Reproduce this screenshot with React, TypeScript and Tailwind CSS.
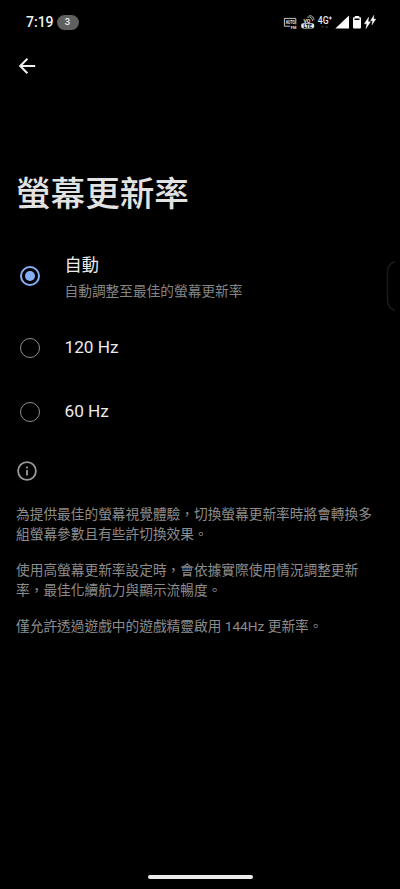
import { useState } from "react";
import clsx from "clsx";

type Option = {
  id: string;
  label: string;
  description?: string;
};

const OPTIONS: Option[] = [
  { id: "auto", label: "自動", description: "自動調整至最佳的螢幕更新率" },
  { id: "120", label: "120 Hz" },
  { id: "60", label: "60 Hz" },
];

const NOTES = [
  ["為提供最佳的螢幕視覺體驗，切換螢幕更新率時將會轉換多", "組螢幕參數且有些許切換效果。"],
  ["使用高螢幕更新率設定時，會依據實際使用情況調整更新", "率，最佳化續航力與顯示流暢度。"],
  ["僅允許透過遊戲中的遊戲精靈啟用 144Hz 更新率。"],
];

function StatusIcons() {
  return (
    <svg width="94" height="18" viewBox="282 13 94 18" fill="#e8e8e8">
      {/* auto refresh rate */}
      <path d="M290 26.2h-5.6V18.4h11.400v6" fill="none" stroke="#c8c8c8" strokeWidth="1" />
      <text x="285.7" y="24.4" fontSize="5.4" fontWeight="700" textLength="9.3" lengthAdjust="spacingAndGlyphs">AUTO</text>
      <text x="290.8" y="28.6" fontSize="3.8" fontWeight="700">FM</text>

      {/* VoLTE over wifi */}
      <text x="303.4" y="22.6" fontSize="6" fontWeight="700" textLength="7" lengthAdjust="spacingAndGlyphs">VO</text>
      <path d="M307.300 17.2q4.400-1.400 5.400 4M309.200 15.600q4.600.1 4.800 4.600" fill="none" stroke="#c8c8c8" strokeWidth="0.9" />
      <rect x="301.200" y="23.200" width="13" height="5.200" rx="1.800" />
      <text x="303.4" y="27.700" fontSize="5.200" fontWeight="700" fill="#000" textLength="8.600" lengthAdjust="spacingAndGlyphs">LTE</text>

      <text x="317.800" y="23.800" fontSize="10" fontWeight="500" textLength="10.800" lengthAdjust="spacingAndGlyphs">4G</text>
      <path d="M328.700 18h3.200M330.300 16.400v3.200" stroke="#e8e8e8" strokeWidth="1" />
      <path d="M321.400 26.200h2.400l-1.200 1.500zM325.600 27.500h2.400l-1.200-1.500z" fill="#555" />

      <path d="M335.300 28.600 349 15.400v13.200z" fill="#fff" />

      <path d="M354.800 16h4.400v1.200h1q.8 0 .8.8v9.600q0 .8-.8.8h-6.400q-.8 0-.8-.8V18q0-.8.8-.8h1z" fill="#fff" />
      <path d="M354.500 18.500h5v1.500h-5z" fill="#000" />

      {/* double charging bolt */}
      <path d="M368.700 17 364.300 23.800h2.400l-.8 4.900 4.700-7h-2.500z" fill="#fff" stroke="#fff" strokeWidth="0.3" />
      <path d="M373.900 15.200 370.500 20.700h2l-.6 4.400 3.900-6h-2.200z" fill="#fff" stroke="#fff" strokeWidth="0.3" />
    </svg>
  );
}

function StatusBar() {
  return (
    <div className="flex h-11 items-center pr-6 pl-[26px]">
      <span className="text-[14px] leading-5 font-medium text-[#f2f2f2]">7:19</span>
      <span className="ml-[3px] flex h-[15px] w-[22px] items-center justify-center rounded-full bg-[#606060] text-[9.5px] font-medium text-[#eee]">
        3
      </span>
      <span className="ml-auto">
        <StatusIcons />
      </span>
    </div>
  );
}

function Radio({ checked }: { checked: boolean }) {
  return (
    <span
      className={clsx(
        "flex size-5 shrink-0 items-center justify-center rounded-full",
        checked ? "border-2 border-[#86aef4]" : "border border-[#8e8e8e]"
      )}
    >
      {checked && <span className="size-2.5 rounded-full bg-[#86aef4]" />}
    </span>
  );
}

export default function App() {
  const [selected, setSelected] = useState("auto");

  return (
    <div className="relative flex h-[889px] w-[400px] flex-col overflow-hidden bg-black font-['Roboto','Noto_Sans_CJK_TC',sans-serif]">
      <StatusBar />

      <header className="flex h-11 items-center pl-[15px]">
        <button aria-label="返回" className="size-6 text-[#f0f0f0]">
          <svg width="24" height="24" viewBox="0 0 24 24" fill="none" stroke="currentColor" strokeWidth="2">
            <path d="M20.2 12H5.6M12.4 4.8 5.2 12l7.2 7.2" />
          </svg>
        </button>
      </header>

      <h1 className="mt-20 ml-4 text-[34.6px] leading-[52px] font-medium text-[#e2e2e2]">螢幕更新率</h1>

      <div role="radiogroup" className="mt-[15px]">
        {OPTIONS.map((option) => (
          <button
            key={option.id}
            role="radio"
            aria-checked={selected === option.id}
            onClick={() => setSelected(option.id)}
            className={clsx("flex w-full items-center pl-5 text-left", option.description ? "h-[81px]" : "h-16")}
          >
            <Radio checked={selected === option.id} />
            <span className="ml-[24.5px] flex flex-col">
              <span
                className={clsx(
                  "text-[17.2px] leading-6 text-[#ececec]",
                  option.description ? "pt-[3px]" : "-mt-[3px]"
                )}
              >
                {option.label}
              </span>
              {option.description && (
                <span className="mt-1 text-[13.7px] leading-5 text-[#858585]">{option.description}</span>
              )}
            </span>
          </button>
        ))}
      </div>

      <footer className="mt-[15px] px-4 text-[13.7px] leading-5 text-[#8c8c8c]">
        <svg width="24" height="24" viewBox="0 0 24 24" fill="none" stroke="#9a9a9a" strokeWidth="1.8" className="-ml-px">
          <circle cx="12" cy="12" r="8.9" />
          <path d="M12 11v5.4M12 7.4v2" />
        </svg>
        <div className="mt-[21px] space-y-4">
          {NOTES.map((lines) => (
            <p key={lines[0]}>
              {lines.map((line) => (
                <span key={line} className="block whitespace-nowrap">
                  {line}
                </span>
              ))}
            </p>
          ))}
        </div>
      </footer>

      {/* edge panel handle */}
      <svg className="absolute top-[258px] right-0" width="14" height="56" viewBox="0 0 14 56" fill="none" stroke="#1c1c1c" strokeWidth="1.4">
        <path d="M9 3.5Q1.5 6 1.5 14V42Q1.5 50 9 52.5" />
      </svg>

      <div className="mt-auto mb-2.5 h-[4px] w-[105px] self-center rounded-full bg-[#ececec]" />
    </div>
  );
}
